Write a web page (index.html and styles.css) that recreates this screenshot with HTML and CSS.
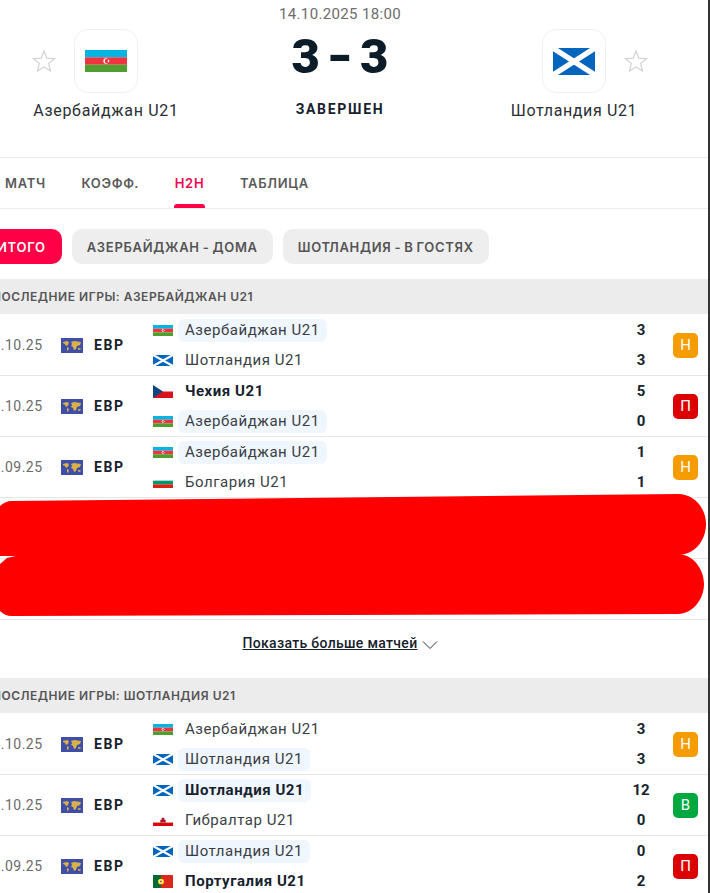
FILE: index.html
```html
<!DOCTYPE html>
<html lang="ru">
  <head>
    <meta charset="UTF-8" />
    <title>Азербайджан U21 - Шотландия U21</title>
    <link rel="stylesheet" href="styles.css">
  </head>
  <body>
    <svg width="0" height="0" class="defs">
      <defs>
        <symbol id="flag-az" viewBox="0 0 30 15" preserveAspectRatio="none">
          <rect width="30" height="5" fill="#00b5e2"/>
          <rect y="5" width="30" height="5" fill="#ef3340"/>
          <rect y="10" width="30" height="5" fill="#509e2f"/>
          <circle cx="15" cy="7.5" r="1.9" fill="#fff"/>
          <circle cx="15.6" cy="7.5" r="1.5" fill="#ef3340"/>
          <circle cx="16.8" cy="7.5" r=".6" fill="#fff"/>
        </symbol>
        <symbol id="flag-sc" viewBox="0 0 30 18" preserveAspectRatio="none">
          <rect width="30" height="18" fill="#0065bd"/>
          <path d="M0 0L30 18M30 0L0 18" stroke="#fff" stroke-width="3.6"/>
        </symbol>
        <symbol id="flag-cz" viewBox="0 0 30 20" preserveAspectRatio="none">
          <rect width="30" height="10" fill="#fff"/>
          <rect y="10" width="30" height="10" fill="#d7141a"/>
          <path d="M0 0L15 10L0 20Z" fill="#11457e"/>
        </symbol>
        <symbol id="flag-bg" viewBox="0 0 30 18" preserveAspectRatio="none">
          <rect width="30" height="6" fill="#fff"/>
          <rect y="6" width="30" height="6" fill="#00966e"/>
          <rect y="12" width="30" height="6" fill="#d62612"/>
        </symbol>
        <symbol id="flag-gi" viewBox="0 0 30 16" preserveAspectRatio="none">
          <rect width="30" height="11" fill="#fff"/>
          <rect y="11" width="30" height="5" fill="#da000c"/>
          <path d="M11 11V7H13V4H17V7H19V11Z" fill="#a8182a"/>
        </symbol>
        <symbol id="flag-pt" viewBox="0 0 30 20" preserveAspectRatio="none">
          <rect width="12" height="20" fill="#046a38"/>
          <rect x="12" width="18" height="20" fill="#da291c"/>
          <circle cx="12" cy="10" r="4.4" fill="#ffe900"/>
          <circle cx="12" cy="10" r="2.6" fill="#fff"/>
          <circle cx="12" cy="10" r="1.4" fill="#da291c"/>
        </symbol>
        <symbol id="league-eu" viewBox="0 0 22 15" preserveAspectRatio="none">
          <rect width="22" height="15" fill="#3f4ea6"/>
          <path d="M2 4L6 3L8 4L7 7L5 8L4 6L2 5Z" fill="#d9b14c"/>
          <path d="M6 9L8 10L7 13L6 12Z" fill="#d9b14c"/>
          <path d="M10 4L13 3L20 4L19 7L16 8L15 11L13 12L12 9L10 8L11 6Z" fill="#d9b14c"/>
          <path d="M17 10L20 10.500L19 12L17 11.500Z" fill="#d9b14c"/>
        </symbol>
        <symbol id="star" viewBox="0 0 24 24">
          <path d="M12 2.2L14.9 9.1L22.4 9.700L16.700 14.600L18.400 21.900L12 18L5.600 21.900L7.300 14.600L1.600 9.700L9.100 9.100Z" fill="none" stroke="#d4d4d4" stroke-width="1.3"/>
        </symbol>
      </defs>
    </svg>

    <div class="page">
      <header class="match-head">
        <div class="date">14.10.2025 18:00</div>
        <div class="head-row">
          <div class="team team-home">
            <div class="team-top">
              <svg class="star"><use href="#star"/></svg>
              <div class="logo"><svg class="logo-az"><use href="#flag-az"/></svg></div>
            </div>
            <div class="team-name">Азербайджан U21</div>
          </div>
          <div class="score-box">
            <div class="score"><span>3</span><span class="dash">-</span><span>3</span></div>
            <div class="status">ЗАВЕРШЕН</div>
          </div>
          <div class="team team-away">
            <div class="team-top">
              <div class="logo"><svg class="logo-sc"><use href="#flag-sc"/></svg></div>
              <svg class="star"><use href="#star"/></svg>
            </div>
            <div class="team-name">Шотландия U21</div>
          </div>
        </div>
      </header>

      <nav class="tabs">
        <a class="tab">МАТЧ</a>
        <a class="tab">КОЭФФ.</a>
        <a class="tab active">H2H</a>
        <a class="tab">ТАБЛИЦА</a>
      </nav>

      <div class="filters">
        <button class="chip active">ИТОГО</button>
        <button class="chip">АЗЕРБАЙДЖАН - ДОМА</button>
        <button class="chip">ШОТЛАНДИЯ - В ГОСТЯХ</button>
      </div>

      <div class="section-title">ПОСЛЕДНИЕ ИГРЫ: АЗЕРБАЙДЖАН U21</div>
      <div class="games">
        <div class="game">
          <div class="g-date">14.10.25</div>
          <svg class="g-flag"><use href="#league-eu"/></svg>
          <div class="g-league">ЕВР</div>
          <div class="g-teams">
            <div class="g-team"><svg class="mini"><use href="#flag-az"/></svg><span class="nm own">Азербайджан U21</span></div>
            <div class="g-team"><svg class="mini"><use href="#flag-sc"/></svg><span class="nm">Шотландия U21</span></div>
          </div>
          <div class="g-score"><span>3</span><span>3</span></div>
          <div class="res draw">Н</div>
        </div>
        <div class="game">
          <div class="g-date">10.10.25</div>
          <svg class="g-flag"><use href="#league-eu"/></svg>
          <div class="g-league">ЕВР</div>
          <div class="g-teams">
            <div class="g-team"><svg class="mini tall"><use href="#flag-cz"/></svg><span class="nm win">Чехия U21</span></div>
            <div class="g-team"><svg class="mini"><use href="#flag-az"/></svg><span class="nm own">Азербайджан U21</span></div>
          </div>
          <div class="g-score"><span>5</span><span>0</span></div>
          <div class="res lose">П</div>
        </div>
        <div class="game">
          <div class="g-date">05.09.25</div>
          <svg class="g-flag"><use href="#league-eu"/></svg>
          <div class="g-league">ЕВР</div>
          <div class="g-teams">
            <div class="g-team"><svg class="mini"><use href="#flag-az"/></svg><span class="nm own">Азербайджан U21</span></div>
            <div class="g-team"><svg class="mini"><use href="#flag-bg"/></svg><span class="nm">Болгария U21</span></div>
          </div>
          <div class="g-score"><span>1</span><span>1</span></div>
          <div class="res draw">Н</div>
        </div>
        <div class="game"></div>
        <div class="game"></div>
      </div>
      <div class="more"><a>Показать больше матчей</a>
        <svg class="chev" viewBox="0 0 16 10"><path d="M1 1.500L8 8.500L15 1.500" fill="none" stroke="#24323f" stroke-width="1"/></svg>
      </div>

      <div class="section-title">ПОСЛЕДНИЕ ИГРЫ: ШОТЛАНДИЯ U21</div>
      <div class="games">
        <div class="game">
          <div class="g-date">14.10.25</div>
          <svg class="g-flag"><use href="#league-eu"/></svg>
          <div class="g-league">ЕВР</div>
          <div class="g-teams">
            <div class="g-team"><svg class="mini"><use href="#flag-az"/></svg><span class="nm">Азербайджан U21</span></div>
            <div class="g-team"><svg class="mini"><use href="#flag-sc"/></svg><span class="nm own">Шотландия U21</span></div>
          </div>
          <div class="g-score"><span>3</span><span>3</span></div>
          <div class="res draw">Н</div>
        </div>
        <div class="game">
          <div class="g-date">10.10.25</div>
          <svg class="g-flag"><use href="#league-eu"/></svg>
          <div class="g-league">ЕВР</div>
          <div class="g-teams">
            <div class="g-team"><svg class="mini"><use href="#flag-sc"/></svg><span class="nm own win">Шотландия U21</span></div>
            <div class="g-team"><svg class="mini"><use href="#flag-gi"/></svg><span class="nm">Гибралтар U21</span></div>
          </div>
          <div class="g-score"><span>12</span><span>0</span></div>
          <div class="res won">В</div>
        </div>
        <div class="game">
          <div class="g-date">05.09.25</div>
          <svg class="g-flag"><use href="#league-eu"/></svg>
          <div class="g-league">ЕВР</div>
          <div class="g-teams">
            <div class="g-team"><svg class="mini"><use href="#flag-sc"/></svg><span class="nm own">Шотландия U21</span></div>
            <div class="g-team"><svg class="mini tall"><use href="#flag-pt"/></svg><span class="nm win">Португалия U21</span></div>
          </div>
          <div class="g-score"><span>0</span><span>2</span></div>
          <div class="res lose">П</div>
        </div>
      </div>
    </div>

    <!-- red marker strokes painted over the screenshot -->
    <svg class="scribble" viewBox="0 0 710 893">
      <path d="M12 501L678 494C694 494 706 508 706 524C706 541 694 555 678 555L0 556L0 506C3 503 7 501 12 501Z" fill="#ff0000"/>
      <path d="M7 558L24 554L678 554C692 554 704 568 704 584C704 600 692 614 678 614L12 616C7 616 3 614 0 611L0 564Z" fill="#ff0000"/>
    </svg>
  </body>
</html>
```

FILE: styles.css
```css
html,
body {
  margin: 0;
  height: 893px;
  overflow: hidden;
  background: #fff;
}

body {
  position: relative;
  font-family: Roboto, "Liberation Sans", sans-serif;
  color: #17222d;
}

.defs {
  position: absolute;
}

.page {
  width: 708px;
  height: 893px;
  overflow: hidden;
  border-right: 2px solid #333;
}

.match-head {
  height: 158px;
  box-sizing: border-box;
  padding-top: 6px;
  border-bottom: 1px solid #ececec;
}

.date {
  width: 680px;
  text-align: center;
  font-size: 15px;
  line-height: 16px;
  letter-spacing: 0.35px;
  color: #6b6b6b;
}

.head-row {
  display: flex;
  justify-content: space-between;
  margin-top: 7px;
}

.team {
  display: flex;
  flex-direction: column;
  align-items: center;
}

.team-home {
  margin-left: 32px;
  width: 148px;
}

.team-away {
  margin-right: 66px;
  width: 136px;
}

.team-top {
  display: flex;
  align-items: center;
  gap: 18px;
  height: 64px;
}

.team-home .team-top {
  align-self: flex-start;
}

.team-away .team-top {
  align-self: flex-end;
  margin-right: -6px;
}

.star {
  width: 24px;
  height: 24px;
}

.logo {
  width: 64px;
  height: 64px;
  box-sizing: border-box;
  border: 1px solid #f0f0f0;
  border-radius: 14px;
  display: flex;
  align-items: center;
  justify-content: center;
}

.logo-az {
  width: 42px;
  height: 22px;
}

.logo-sc {
  width: 42px;
  height: 27px;
}

.team-name {
  margin-top: 8px;
  font-size: 16px;
  line-height: 20px;
  letter-spacing: 0.7px;
  white-space: nowrap;
  color: #2a2f35;
}

.team-away .team-name {
  letter-spacing: 0.62px;
}

.score-box {
  width: 120px;
  margin-left: -6px;
  text-align: center;
}

.score {
  display: flex;
  justify-content: center;
  align-items: center;
  gap: 9px;
  height: 44px;
  margin-top: 6px;
  font-weight: 900;
  font-size: 49px;
  line-height: 44px;
  color: #0c1c29;
}

.dash {
  transform: scaleX(1.3);
}

.status {
  margin-top: 21px;
  font-size: 14px;
  line-height: 18px;
  font-weight: 700;
  letter-spacing: 1.7px;
}

.tabs {
  display: flex;
  gap: 35.6px;
  height: 50px;
  margin-left: 5px;
}

.tab {
  position: relative;
  font-family: Inter, sans-serif;
  font-size: 13px;
  font-weight: 600;
  letter-spacing: 0.7px;
  line-height: 50px;
  color: #5a5a5a;
}

.tab.active {
  color: #f0094f;
}

.tab.active::after {
  content: "";
  position: absolute;
  left: -1px;
  right: -1px;
  bottom: 0;
  height: 4px;
  background: #ff0046;
  border-radius: 3px 3px 0 0;
}

.filters {
  display: flex;
  gap: 10px;
  height: 71px;
  box-sizing: border-box;
  margin-left: -27px;
  padding-top: 20px;
  border-top: 1px solid #ececec;
  width: 760px;
}

.chip {
  height: 35px;
  padding: 0 15px;
  border: none;
  border-radius: 10px;
  font-family: Inter, sans-serif;
  font-size: 13px;
  font-weight: 600;
  letter-spacing: 0.7px;
  word-spacing: -1px;
  background: #eeeeee;
  color: #555;
}

.chip.active {
  background: #ff0046;
  color: #fff;
  padding: 0 16px 0 24px;
}

.section-title {
  height: 35px;
  margin-left: -8px;
  background: #ececec;
  font-family: Inter, sans-serif;
  font-size: 12px;
  font-weight: 600;
  letter-spacing: 0.52px;
  line-height: 35px;
  color: #555;
}

.games {
  padding-top: 1px;
}

.game {
  display: flex;
  align-items: center;
  height: 61px;
  box-sizing: border-box;
  border-bottom: 1px solid #e6e6e6;
}

.g-date {
  width: 77px;
  margin-left: -16px;
  flex: none;
  font-size: 14px;
  letter-spacing: 0.5px;
  color: #6b6b6b;
}

.g-flag {
  flex: none;
  width: 22px;
  height: 15px;
}

.g-league {
  width: 70px;
  flex: none;
  padding-left: 11px;
  box-sizing: border-box;
  font-size: 14px;
  font-weight: 700;
  letter-spacing: 1.6px;
}

.g-teams {
  width: 476px;
  flex: none;
  display: flex;
  flex-direction: column;
  gap: 7px;
}

.g-team {
  display: flex;
  align-items: center;
  height: 23px;
}

.mini {
  flex: none;
  width: 20px;
  height: 11px;
}

.mini.tall {
  height: 13px;
}

.nm {
  margin-left: 5px;
  padding: 0 7px;
  height: 23px;
  line-height: 23px;
  font-size: 15px;
  letter-spacing: 0.55px;
  color: #3a3f45;
  border-radius: 6px;
}

.nm.own {
  background: #eff6fd;
}

.nm.win {
  font-weight: 700;
  color: #17222d;
}

.g-score {
  width: 24px;
  flex: none;
  display: flex;
  flex-direction: column;
  align-items: center;
  gap: 7px;
  font-size: 15px;
  font-weight: 700;
  line-height: 23px;
}

.res {
  width: 25px;
  height: 25px;
  flex: none;
  margin-left: 20px;
  border-radius: 5px;
  text-align: center;
  font-size: 15px;
  line-height: 25px;
  color: #fff;
}

.res.draw {
  background: #f59c00;
}

.res.lose {
  background: #dc0000;
}

.res.won {
  background: #00a83f;
}

.more {
  display: flex;
  justify-content: center;
  align-items: center;
  gap: 5px;
  height: 58px;
  box-sizing: border-box;
  padding-bottom: 12px;
  width: 681px;
  font-size: 14px;
  font-weight: 500;
  letter-spacing: 0.32px;
}

.more a {
  text-decoration: underline;
}

.chev {
  width: 16px;
  height: 10px;
  margin-top: 3px;
}

.scribble {
  position: absolute;
  left: 0;
  top: 0;
  width: 710px;
  height: 893px;
}
```
